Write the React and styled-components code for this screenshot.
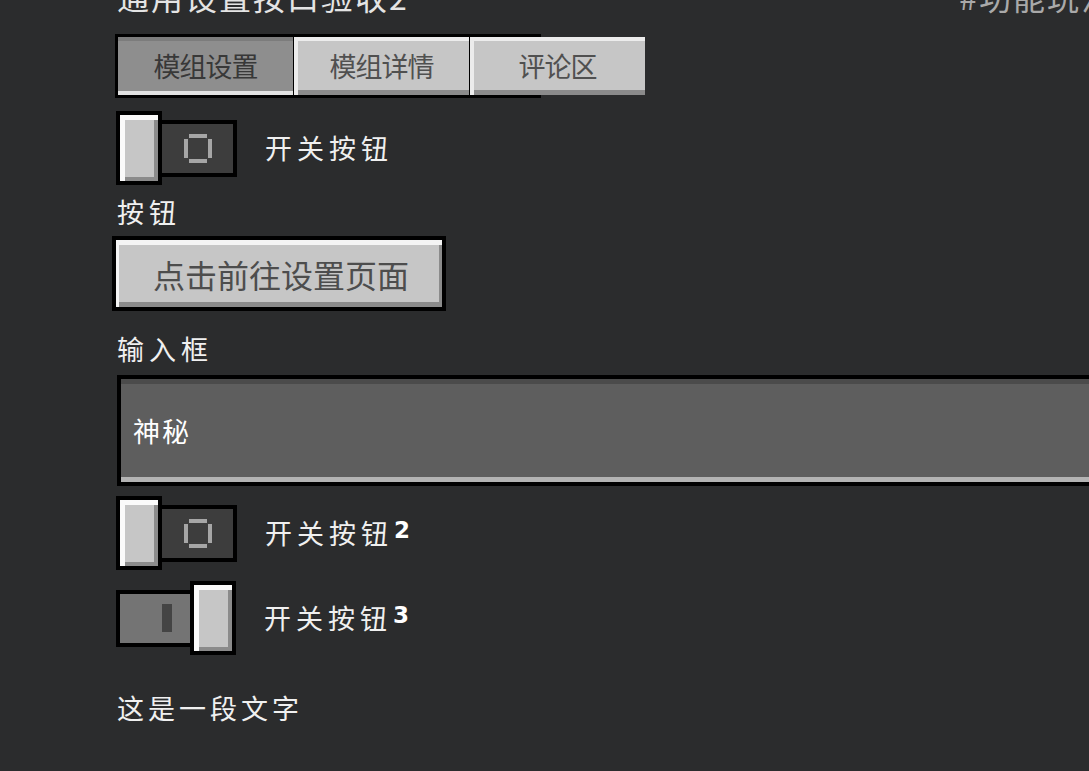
import React from 'react'
import styled, { createGlobalStyle } from 'styled-components'

const GlobalStyle = createGlobalStyle`
  html, body {
    margin: 0;
    padding: 0;
    background: #2b2c2d;
    overflow: hidden;
  }
  body {
    font-family: "Noto Sans CJK SC", "Noto Sans", sans-serif;
  }
`

function RingIcon() {
  return (
    <svg width="28" height="29" viewBox="0 0 28 29">
      <rect x="5" y="0" width="18" height="4" fill="#a6a6a6" />
      <rect x="5" y="25" width="18" height="4" fill="#a6a6a6" />
      <rect x="0" y="5" width="4" height="19" fill="#a6a6a6" />
      <rect x="24" y="5" width="4" height="19" fill="#a6a6a6" />
    </svg>
  )
}

function Toggle({ on }) {
  if (on) {
    return (
      <ToggleWrap>
        <Track on>
          <Bar />
        </Track>
        <Knob on />
      </ToggleWrap>
    )
  }
  return (
    <ToggleWrap>
      <Knob />
      <Track>
        <RingIcon />
      </Track>
    </ToggleWrap>
  )
}

function App() {
  return (
    <Page>
      <GlobalStyle />
      <Column>
        <Header>
          <Title>通用设置按口验收2</Title>
          <SideTitle>#功能玩法</SideTitle>
        </Header>

        <TabFrame>
          <Tab active>模组设置</Tab>
          <Tab divider>模组详情</Tab>
          <Tab divider>评论区</Tab>
        </TabFrame>

        <ToggleRow top={13}>
          <Toggle />
          <Label>开关按钮</Label>
        </ToggleRow>

        <Label top={9}>按钮</Label>
        <Button>点击前往设置页面</Button>

        <Label top={20}>输入框</Label>
        <Input defaultValue="神秘" readOnly />

        <ToggleRow top={10}>
          <Toggle />
          <Label>开关按钮<Sup>2</Sup></Label>
        </ToggleRow>

        <ToggleRow top={11}>
          <Toggle on />
          <Label>开关按钮<Sup>3</Sup></Label>
        </ToggleRow>

        <Label top={35} spacing={4}>这是一段文字</Label>
      </Column>
    </Page>
  )
}

export default App

const Page = styled.div`
  width: 1200px;
  height: 771px;
  overflow: hidden;
`
const Column = styled.div`
  display: flex;
  flex-direction: column;
  align-items: flex-start;
  width: 1010px;
  padding-left: 117px;
`
const Header = styled.div`
  display: flex;
  justify-content: space-between;
  align-self: stretch;
  margin-top: -21px;
  height: 34px;
`
const Title = styled.div`
  font-size: 32px;
  line-height: 34px;
  letter-spacing: 2px;
  color: #e4e4e4;
  white-space: nowrap;
`
const SideTitle = styled.div`
  font-size: 32px;
  line-height: 34px;
  letter-spacing: 2px;
  color: #a9a9a9;
  white-space: nowrap;
  margin-right: 12px;
`
const TabFrame = styled.div`
  display: flex;
  width: 426px;
  height: 64px;
  box-sizing: border-box;
  margin-top: 21px;
  margin-left: -2px;
  border: 3px solid #000;
  overflow: visible;
`
const Tab = styled.div`
  flex: 0 0 auto;
  width: ${p => (p.divider ? 176 : 175)}px;
  height: 58px;
  box-sizing: border-box;
  display: flex;
  align-items: center;
  justify-content: center;
  padding-bottom: 2px;
  font-size: 27px;
  letter-spacing: -1px;
  border-left: ${p => (p.divider ? '1px solid #000' : 'none')};
  background: ${p => (p.active ? '#8e8e8e' : '#c6c6c6')};
  color: ${p => (p.active ? '#383838' : '#505050')};
  box-shadow: ${p =>
    p.active
      ? 'inset 0 4px 0 #7c7c7c, inset 0 -4px 0 #e2e2e2'
      : 'inset 4px 4px 0 #ececec, inset 0 -5px 0 #8b8b8b'};
`
const ToggleRow = styled.div`
  display: flex;
  align-items: center;
  margin-top: ${p => p.top || 0}px;
  margin-left: -1px;
`
const ToggleWrap = styled.div`
  display: flex;
  align-items: center;
`
const Knob = styled.div`
  position: relative;
  z-index: 1;
  width: 46px;
  height: 74px;
  box-sizing: border-box;
  margin-left: ${p => (p.on ? -6 : 0)}px;
  border: 4px solid #000;
  background: #c6c6c6;
  box-shadow: inset 5px 5px 0 #fafafa, inset -4px -4px 0 #8b8b8b;
`
const Track = styled.div`
  width: ${p => (p.on ? 80 : 79)}px;
  height: 57px;
  box-sizing: border-box;
  margin-left: ${p => (p.on ? 0 : -4)}px;
  border: 4px solid #000;
  background: ${p => (p.on ? '#747474' : '#3d3d3d')};
  display: flex;
  align-items: center;
  justify-content: ${p => (p.on ? 'flex-end' : 'center')};
  padding-right: ${p => (p.on ? 20 : 0)}px;
`
const Bar = styled.div`
  width: 10px;
  height: 28px;
  background: #444444;
`
const Label = styled.div`
  margin-top: ${p => p.top || 0}px;
  margin-left: ${p => (p.top === undefined ? 28 : 0)}px;
  font-size: 27px;
  line-height: 36px;
  letter-spacing: ${p => p.spacing || 5}px;
  color: #f0f0f0;
  white-space: nowrap;
`
const Sup = styled.span`
  display: inline-block;
  vertical-align: top;
  margin-top: 4px;
  margin-left: 1px;
  font-family: "DejaVu Sans", sans-serif;
  font-weight: 900;
  font-size: 23px;
  line-height: 22px;
  letter-spacing: 0;
  color: #ffffff;
`
const Button = styled.div`
  width: 334px;
  height: 75px;
  box-sizing: border-box;
  margin-top: 6px;
  margin-left: -5px;
  border: 4px solid #000;
  background: #c6c6c6;
  box-shadow: inset 3px 5px 0 #f4f4f4, inset -3px -5px 0 #8b8b8b;
  display: flex;
  align-items: center;
  justify-content: center;
  padding-left: 4px;
  font-size: 32px;
  color: #4d4d4d;
`
const Input = styled.input`
  align-self: stretch;
  height: 111px;
  box-sizing: border-box;
  margin: 8px 0 0 0;
  padding: 0 0 0 12px;
  border: 4px solid #000;
  outline: none;
  background: #5e5e5e;
  box-shadow: inset 0 5px 0 #4b4b4b, inset 0 -5px 0 #b3b3b3;
  font-family: "Noto Sans CJK SC", "Noto Sans", sans-serif;
  font-size: 27px;
  letter-spacing: 2px;
  color: #ffffff;
`
